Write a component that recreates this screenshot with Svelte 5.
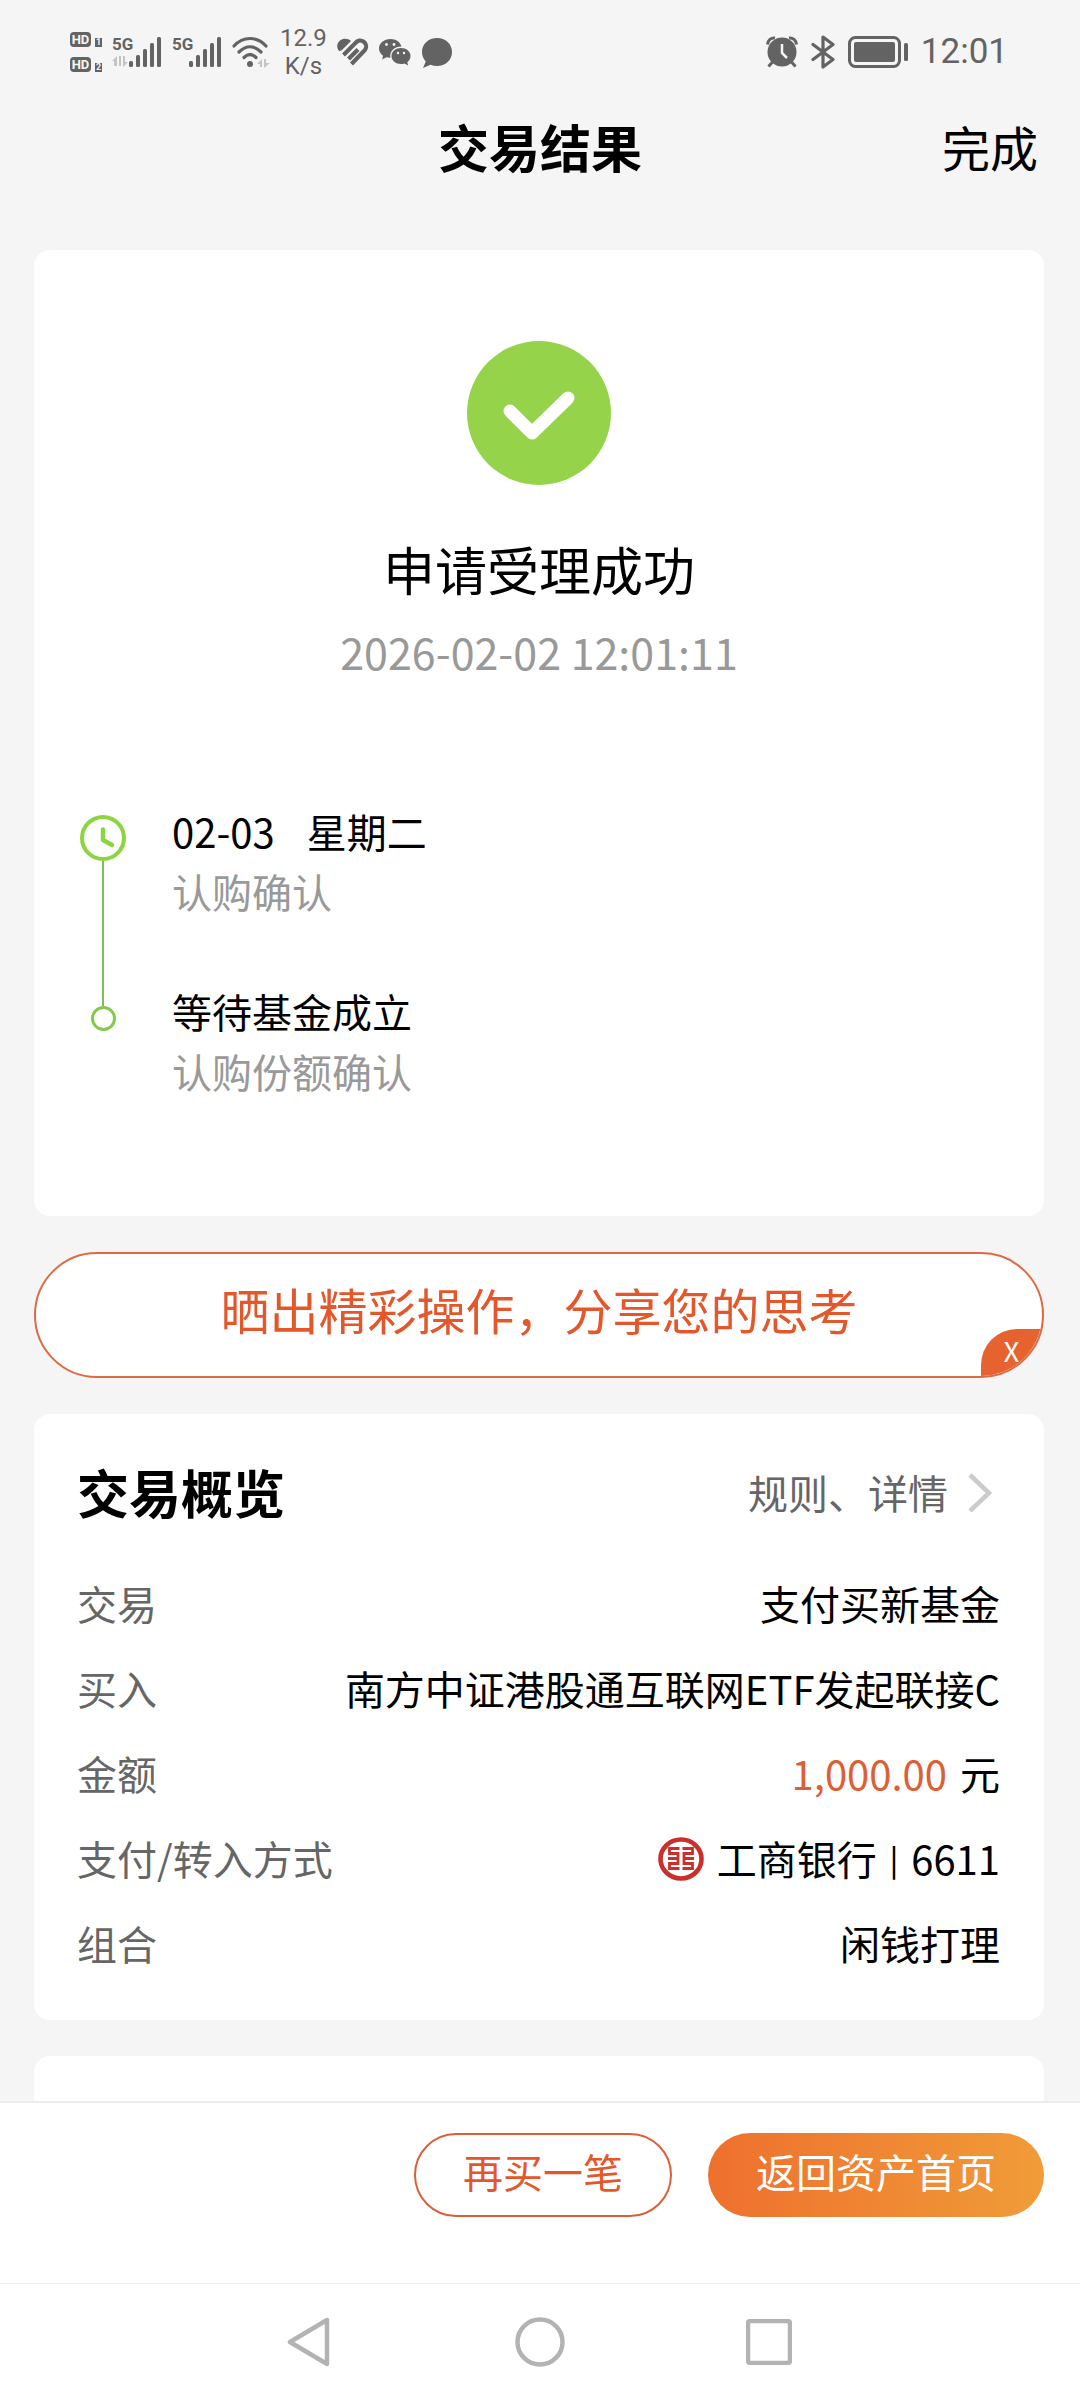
<script>
  // Steps shown in the confirmation timeline
  const steps = [
    { title: '02-03', weekday: '星期二', desc: '认购确认', current: true },
    { title: '等待基金成立', desc: '认购份额确认', current: false }
  ];

  const sims = [1, 2];

  let shareVisible = $state(true);
</script>

<div class="app">
  <div class="status">
    <div class="status-left">
      <!-- HD calling badges for both SIM cards -->
      <div class="hd-col">
        {#each sims as sim}
          <div class="hd-row">
            <span class="hd">HD</span>
            <span class="sim">{sim}</span>
          </div>
        {/each}
      </div>

      {#each sims as sim}
        <div class="signal">
          <span class="net">5G</span>
          <svg width="50" height="32" viewBox="0 0 50 32">
            {#if sim === 1}
              <path d="M0 25L5 20V30H2V25z M7 20h2v10H7z M11 20h2v6h3L11 31z" fill="#c4c4c4" />
            {/if}
            <g fill="#636363">
              <rect x="17" y="25" width="4" height="6" rx="1.5" />
              <rect x="24" y="19" width="4" height="12" rx="1.5" />
              <rect x="31" y="13" width="4" height="18" rx="1.5" />
              <rect x="38" y="7" width="4" height="24" rx="1.5" />
              <rect x="45" y="1" width="4" height="30" rx="1.5" />
            </g>
          </svg>
        </div>
      {/each}

      <svg width="38" height="32" viewBox="0 0 38 32">
        <g fill="none" stroke="#636363" stroke-width="3.2" stroke-linecap="round">
          <path d="M2 10C11 0 25 0 34 10" />
          <path d="M7 16C14 9 22 9 29 16" />
          <path d="M12 21.5C16 17.5 20 17.5 24 21.5" />
        </g>
        <circle cx="18" cy="28" r="3" fill="#636363" />
        <path d="M25 28L30 23V31H28V28z M32 23h2v4h4L32 32z" fill="#c4c4c4" />
      </svg>

      <div class="speed">
        <span>12.9</span>
        <span>K/s</span>
      </div>

      <svg width="32" height="28" viewBox="0 0 32 28">
        <path d="M2 13C-1 9 0 5 3 2.5S11 0 14 3L4.5 12.5z" fill="#636363" />
        <path
          d="M6.5 17L18.5 5A5.5 5.5 0 0 1 28 12L14.5 26M11.5 21L21 11.5"
          fill="none"
          stroke="#636363"
          stroke-width="4.2"
        />
      </svg>

      <svg width="32" height="28" viewBox="0 0 32 28">
        <path
          d="M11.5 1C5 1 0 5.3 0 10.5c0 3 1.6 5.5 4 7.3L3.2 21.5l4.3-2.2c1.2.3 2.5.5 3.9.5-1-6.5 4-11.3 11-11.3C21.5 4 17 1 11.5 1z"
          fill="#636363"
        />
        <path
          d="M22 10c-5.3 0-9.5 3.5-9.5 8s4.2 8 9.5 8c1.2 0 2.4-.2 3.5-.6l3.7 2-.9-3.2c2-1.5 3.2-3.7 3.2-6.2 0-4.5-4.2-8-9.5-8z"
          fill="#636363"
        />
        <g fill="#f5f5f5">
          <circle cx="7.5" cy="6.5" r="1.4" />
          <circle cx="15" cy="6.5" r="1.4" />
          <circle cx="19" cy="15" r="1.2" />
          <circle cx="25" cy="15" r="1.2" />
        </g>
      </svg>

      <svg width="32" height="31" viewBox="0 0 32 31">
        <path
          d="M16 1C7.5 1 1 7 1 15c0 4 1.5 7 3.8 9.4L2 31l7.5-3.2c2 .8 4.2 1.2 6.5 1.2 8.5 0 15-6 15-14S24.5 1 16 1z"
          fill="#636363"
        />
      </svg>
    </div>

    <div class="status-right">
      <svg width="32" height="32" viewBox="0 0 32 32">
        <circle cx="16" cy="16" r="14.5" fill="#636363" />
        <path
          d="M1.5 8.5C2 4 5 1.5 9 2M30.5 8.5C30 4 27 1.5 23 2M6.5 26l-4 4.5M25.5 26l4 4.5"
          fill="none"
          stroke="#636363"
          stroke-width="3"
        />
        <path d="M16 8v9l5 5" fill="none" stroke="#f5f5f5" stroke-width="2.5" />
      </svg>
      <svg width="24" height="34" viewBox="0 0 24 34">
        <path
          d="M2 9.5L22 24.5L12 32V2L22 9.5L2 24.5"
          fill="none"
          stroke="#636363"
          stroke-width="3.2"
          stroke-linejoin="round"
          stroke-linecap="round"
        />
      </svg>
      <svg width="60" height="34" viewBox="0 0 60 34">
        <rect x="1.5" y="2.5" width="50" height="29" rx="6" fill="none" stroke="#636363" stroke-width="3" />
        <rect x="6" y="7" width="41" height="20" rx="2" fill="#636363" />
        <rect x="56" y="8" width="4" height="18" rx="1.5" fill="#636363" />
      </svg>
      <span class="time">12:01</span>
    </div>
  </div>

  <header class="topbar">
    <h1>交易结果</h1>
    <button class="done">完成</button>
  </header>

  <main>
    <section class="card result">
      <svg width="144" height="144" viewBox="0 0 144 144">
        <circle cx="72" cy="72" r="72" fill="#94d34a" />
        <path
          d="M43 70L65 92L101 57"
          fill="none"
          stroke="#fff"
          stroke-width="13"
          stroke-linecap="round"
          stroke-linejoin="round"
        />
      </svg>
      <h2>申请受理成功</h2>
      <time>2026-02-02 12:01:11</time>

      <ol class="timeline">
        {#each steps as step}
          <li>
            <span class="marker">
              {#if step.current}
                <svg width="46" height="46" viewBox="0 0 46 46">
                  <circle cx="23" cy="23" r="21" fill="none" stroke="#8cd53f" stroke-width="4" />
                  <path
                    d="M23 14.5V25L32 30"
                    fill="none"
                    stroke="#8cd53f"
                    stroke-width="4.5"
                    stroke-linecap="round"
                    stroke-linejoin="round"
                  />
                </svg>
              {:else}
                <span class="dot"></span>
              {/if}
            </span>
            <div>
              <p class="step-title">
                <span>{step.title}</span>
                {#if step.weekday}
                  <span>{step.weekday}</span>
                {/if}
              </p>
              <p class="step-desc">{step.desc}</p>
            </div>
          </li>
        {/each}
      </ol>
    </section>

    {#if shareVisible}
      <div class="share">
        <a href="#share">晒出精彩操作，分享您的思考</a>
        <button class="close" onclick={() => (shareVisible = false)}>X</button>
      </div>
    {/if}

    <section class="card overview">
      <div class="overview-head">
        <h2>交易概览</h2>
        <a href="#detail">
          规则、详情
          <svg width="32" height="40" viewBox="0 0 32 40">
            <path d="M2 3L21 21L2 39" fill="none" stroke="#ccc" stroke-width="4.5" />
          </svg>
        </a>
      </div>

      <dl>
        <div class="row">
          <dt>交易</dt>
          <dd>支付买新基金</dd>
        </div>
        <div class="row">
          <dt>买入</dt>
          <dd>南方中证港股通互联网ETF发起联接C</dd>
        </div>
        <div class="row">
          <dt>金额</dt>
          <dd><span class="amount">1,000.00</span> 元</dd>
        </div>
        <div class="row">
          <dt>支付/转入方式</dt>
          <dd class="bank">
            <svg width="46" height="44" viewBox="0 0 46 44">
              <ellipse cx="23" cy="22" rx="20.5" ry="19.5" fill="none" stroke="#cb2f2c" stroke-width="4.6" />
              <path
                d="M21.5 11.5H11.5V16.5H20V26.5H11.5V31.5H21.5M10 21.5H20M24.5 11.5H34.5V16.5H26V26.5H34.5V31.5H24.5M36 21.5H26"
                fill="none"
                stroke="#cb2f2c"
                stroke-width="2.8"
              />
            </svg>
            <span>工商银行</span>
            <span class="bar">|</span>
            <span>6611</span>
          </dd>
        </div>
        <div class="row">
          <dt>组合</dt>
          <dd>闲钱打理</dd>
        </div>
      </dl>
    </section>

    <section class="card more"></section>
  </main>

  <footer class="actions">
    <button class="btn outline">再买一笔</button>
    <button class="btn primary">返回资产首页</button>
  </footer>

  <!-- System navigation keys -->
  <nav class="keys">
    <button aria-label="返回">
      <svg width="50" height="50" viewBox="0 0 50 50">
        <path d="M4 25L41 3V47Z" fill="none" stroke="#b3b3b3" stroke-width="4.5" stroke-linejoin="round" />
      </svg>
    </button>
    <button aria-label="主页">
      <svg width="50" height="50" viewBox="0 0 50 50">
        <circle cx="25" cy="25" r="22.5" fill="none" stroke="#b3b3b3" stroke-width="4.5" />
      </svg>
    </button>
    <button aria-label="最近任务">
      <svg width="46" height="46" viewBox="0 0 46 46">
        <rect x="2" y="2" width="42" height="42" rx="2" fill="none" stroke="#b3b3b3" stroke-width="4.5" />
      </svg>
    </button>
  </nav>
</div>

<style>
  :global(body) {
    margin: 0;
    background: #f5f5f5;
  }

  .app {
    display: flex;
    flex-direction: column;
    min-height: 100vh;
    background: #f5f5f5;
    color: #000;
    font-family: 'Noto Sans CJK SC', sans-serif;
    font-size: 40px;
    line-height: 60px;
  }

  h1, h2, p, ol, dl, dd {
    margin: 0;
    padding: 0;
  }

  svg {
    display: block;
    flex-shrink: 0;
  }

  button {
    padding: 0;
    border: none;
    background: none;
    color: inherit;
    font: inherit;
    cursor: pointer;
  }

  a {
    color: inherit;
    text-decoration: none;
  }

  /* Status bar */
  .status {
    display: flex;
    justify-content: space-between;
    align-items: center;
    height: 104px;
    padding: 0 72px 0 70px;
    color: #636363;
    font-family: Roboto, sans-serif;
  }

  .status-left,
  .status-right {
    display: flex;
    align-items: center;
    gap: 10px;
  }

  .status-right {
    gap: 13px;
  }

  .hd-col {
    display: flex;
    flex-direction: column;
    gap: 10px;
  }

  .hd-row {
    display: flex;
    align-items: flex-end;
    gap: 4px;
  }

  .hd {
    width: 21px;
    border-radius: 4px;
    background: #636363;
    color: #f5f5f5;
    font-size: 13px;
    font-weight: 700;
    line-height: 15px;
    text-align: center;
  }

  .sim {
    width: 7px;
    background: #636363;
    color: #f5f5f5;
    font-size: 9px;
    font-weight: 700;
    line-height: 9px;
    text-align: center;
  }

  .signal {
    position: relative;
  }

  .net {
    position: absolute;
    top: 0;
    left: 0;
    font-size: 17px;
    font-weight: 700;
    line-height: 16px;
  }

  .speed {
    display: flex;
    flex-direction: column;
    align-items: center;
    font-size: 24px;
    line-height: 28px;
  }

  .time {
    font-size: 35px;
  }

  /* Title bar */
  .topbar {
    display: grid;
    grid-template-columns: 1fr auto 1fr;
    align-items: center;
    height: 84px;
    margin-bottom: 62px;
    padding: 0 42px;
  }

  h1 {
    grid-column: 2;
    font-size: 51px;
    font-weight: 700;
    line-height: 76px;
  }

  .done {
    justify-self: end;
    font-size: 48px;
    line-height: 76px;
  }

  main {
    display: flex;
    flex: 1;
    flex-direction: column;
    gap: 36px;
    padding: 0 36px 0 34px;
  }

  .card {
    border-radius: 16px;
    background: #fff;
  }

  /* Result card */
  .result {
    display: flex;
    flex-direction: column;
    align-items: center;
    padding: 91px 44px 115px;
  }

  .result h2 {
    margin-top: 46px;
    font-size: 52px;
    font-weight: 400;
    line-height: 76px;
  }

  time {
    margin-top: 14px;
    color: #999;
    font-size: 43px;
  }

  .timeline {
    align-self: stretch;
    margin-top: 120px;
    list-style: none;
  }

  .timeline li {
    display: flex;
    gap: 44px;
    padding-bottom: 60px;
  }

  .timeline li:last-child {
    padding-bottom: 0;
  }

  .marker {
    position: relative;
    display: flex;
    justify-content: center;
    align-items: center;
    width: 50px;
    height: 74px;
  }

  /* Line from the clock down to the next dot */
  .timeline li:first-child .marker::after {
    content: '';
    position: absolute;
    top: 60px;
    left: 24px;
    width: 2px;
    height: 145px;
    background: #7fbf4d;
  }

  .dot {
    box-sizing: border-box;
    width: 25px;
    height: 25px;
    border: 3px solid #84c94a;
    border-radius: 50%;
  }

  .step-title {
    display: flex;
    gap: 32px;
  }

  .step-desc {
    color: #999;
  }

  /* Share banner */
  .share {
    position: relative;
    box-sizing: border-box;
    height: 126px;
    overflow: hidden;
    border: 2px solid #dc6a42;
    border-radius: 63px;
    background: #fff;
    color: #e4572b;
    text-align: center;
  }

  .share a {
    display: block;
    font-size: 49px;
    line-height: 110px;
  }

  .close {
    position: absolute;
    right: 0;
    bottom: 0;
    width: 61px;
    height: 47px;
    padding-bottom: 4px;
    border-radius: 36px 0 0 0;
    background: #e66330;
    color: #fff;
    font-size: 27px;
    line-height: 40px;
  }

  /* Overview card */
  .overview {
    padding: 38px 44px 34px 43px;
  }

  .overview-head {
    display: flex;
    justify-content: space-between;
    align-items: center;
    height: 80px;
    margin-bottom: 29px;
  }

  .overview-head h2 {
    font-size: 52px;
    font-weight: 700;
  }

  .overview-head a {
    display: flex;
    align-items: center;
    gap: 20px;
    color: #666;
  }

  .row {
    display: flex;
    justify-content: space-between;
    line-height: 85px;
  }

  dt {
    color: #666;
  }

  .amount {
    margin-right: 4px;
    color: #dd5f35;
  }

  .bank {
    display: flex;
    align-items: center;
    gap: 13px;
  }

  .bar {
    font-size: 30px;
    font-weight: 500;
  }

  .more {
    flex: 1;
    border-radius: 16px 16px 0 0;
  }

  /* Bottom buttons */
  .actions {
    display: flex;
    justify-content: flex-end;
    gap: 36px;
    height: 150px;
    padding-top: 30px;
    padding-right: 36px;
    border-top: 2px solid #ececec;
    background: #fff;
  }

  .btn {
    box-sizing: border-box;
    height: 84px;
    padding: 0 48px 8px;
    border-radius: 42px;
  }

  .outline {
    padding: 0 47px 8px;
    border: 2px solid #d9603a;
    color: #e4572b;
  }

  .primary {
    background: linear-gradient(90deg, #ee702e, #f09c38);
    color: #fff;
  }

  .keys {
    display: flex;
    justify-content: center;
    height: 116px;
    border-top: 1px solid #f0f0f0;
    background: #fff;
  }

  .keys button {
    display: flex;
    justify-content: center;
    align-items: center;
    width: 229px;
  }
</style>
